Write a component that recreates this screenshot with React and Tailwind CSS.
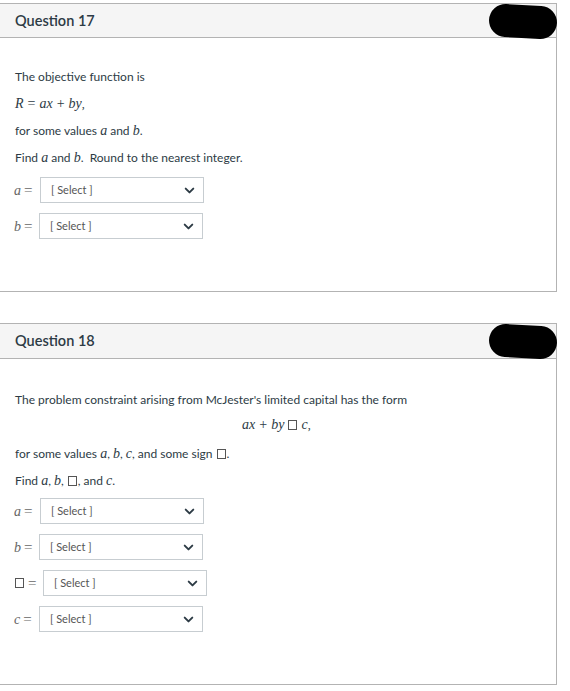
import React from 'react';

const math = { fontFamily: '"Liberation Serif", "DejaVu Serif", serif' };

function M({ children }) {
  return (
    <span className="italic text-[14px]" style={math}>
      {children}
    </span>
  );
}

function Op({ children }) {
  return (
    <span className="text-[14px] mx-[4px]" style={math}>
      {children}
    </span>
  );
}

function Box() {
  return <span className="inline-block w-[9px] h-[10px] border border-[#555] align-[-1px] mx-[1px]" />;
}

function Chevron() {
  return (
    <svg className="w-[13px] h-[13px]" viewBox="0 0 24 24" fill="none" stroke="#2d3b45" strokeWidth={3.6} strokeLinecap="round" strokeLinejoin="round">
      <path d="M5 8.5l7 7 7-7" />
    </svg>
  );
}

function Select({ label, shift = 0 }) {
  return (
    <div className="flex items-center h-[26px]">
      <div className="flex items-center pl-[14px] text-[#666]" style={{ width: 40 + shift }}>
        {label}
        <span className="text-[15px] text-[#666] ml-[3px]" style={math}>=</span>
      </div>
      <div className="w-[164px] h-[26px] border border-[#c7cdd1] bg-white flex items-center justify-between pl-[10px] pr-[7px]">
        <span className="text-[11px] text-[#555]">[ Select ]</span>
        <Chevron />
      </div>
    </div>
  );
}

function Redact() {
  return <div className="absolute right-[-1px] top-[1px] w-[68px] h-[33px] rounded-full bg-black rotate-[3deg]" />;
}

export default function App() {
  return (
    <div className="w-[570px] h-[691px] bg-white pt-[3px] text-[#2d3b45]" style={{ fontFamily: 'Lato, "Liberation Sans", sans-serif' }}>
      {/* Question 17 */}
      <div className="relative w-[557px] h-[289px] border-t border-r border-b border-[#b3b3b3]">
        <div className="h-[34px] bg-[#f5f5f5] border-b border-[#b3b3b3] flex items-center pl-[15px]">
          <span className="text-[14.5px] font-semibold text-[#2d3b45]">Question 17</span>
        </div>
        <div className="pl-[15px] pt-[31px] text-[12px]">
          <div className="h-[15px] leading-[15px]">The objective function is</div>
          <div className="h-[15px] leading-[15px] mt-[12px]"><M>R</M><Op>=</Op><M>ax</M><Op>+</Op><M>by</M><span style={math}>,</span></div>
          <div className="h-[15px] leading-[15px] mt-[12px]">for some values <M>a</M> and <M>b</M>.</div>
          <div className="h-[15px] leading-[15px] mt-[12px]">Find <M>a</M> and <M>b</M>. &nbsp;Round to the nearest integer.</div>
        </div>
        <div className="mt-[12px] flex flex-col gap-[10px]">
          <Select label={<M>a</M>} />
          <Select label={<M>b</M>} shift={-1} />
        </div>
        <Redact />
      </div>

      {/* Question 18 */}
      <div className="relative mt-[31px] w-[557px] h-[362px] border-t border-r border-b border-[#b3b3b3]">
        <div className="h-[35px] bg-[#f5f5f5] border-b border-[#b3b3b3] flex items-center pl-[15px]">
          <span className="text-[14.5px] font-semibold text-[#2d3b45]">Question 18</span>
        </div>
        <div className="pl-[15px] pt-[33px] text-[12px]">
          <div className="h-[15px] leading-[15px]">The problem constraint arising from McJester's limited capital has the form</div>
          <div className="h-[15px] leading-[15px] mt-[10px] pl-[227px]"><M>ax</M><Op>+</Op><M>by</M> <Box /> <M>c</M><span style={math}>,</span></div>
          <div className="h-[15px] leading-[15px] mt-[14px]">for some values <M>a</M>, <M>b</M>, <M>c</M>, and some sign <Box />.</div>
          <div className="h-[15px] leading-[15px] mt-[12px]">Find <M>a</M>, <M>b</M>, <Box />, and <M>c</M>.</div>
        </div>
        <div className="mt-[10px] flex flex-col gap-[10px]">
          <Select label={<M>a</M>} />
          <Select label={<M>b</M>} shift={-1} />
          <Select label={<Box />} shift={3} />
          <Select label={<M>c</M>} shift={-1} />
        </div>
        <Redact />
      </div>
    </div>
  );
}
